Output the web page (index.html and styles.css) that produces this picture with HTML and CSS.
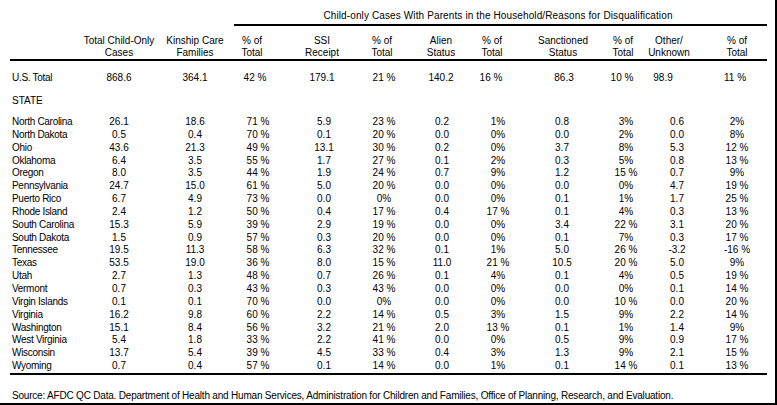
FILE: index.html
```html
<!DOCTYPE html>
<html>
<head>
<meta charset="utf-8">
<link rel="stylesheet" href="styles.css">
</head>
<body>
<div class="sheet">
  <div class="grp"><div class="grp-title">Child-only Cases With Parents in the Household/Reasons for Disqualification</div></div>
  <div class="row head">
    <div></div>
    <div>Total Child-Only<br>Cases</div>
    <div>Kinship Care<br>Families</div>
    <div>% of<br>Total</div>
    <div>SSI<br>Receipt</div>
    <div>% of<br>Total</div>
    <div>Alien<br>Status</div>
    <div>% of<br>Total</div>
    <div>Sanctioned<br>Status</div>
    <div>% of<br>Total</div>
    <div>Other/<br>Unknown</div>
    <div>% of<br>Total</div>
  </div>
  <div class="row us">
    <div>U.S. Total</div><div>868.6</div><div>364.1</div><div>42 %</div><div>179.1</div><div>21 %</div><div>140.2</div><div>16 %</div><div>86.3</div><div>10 %</div><div>98.9</div><div>11 %</div>
  </div>
  <div class="label">STATE</div>
  <div class="rows">
    <div class="row"><div>North Carolina</div><div>26.1</div><div>18.6</div><div>71 %</div><div>5.9</div><div>23 %</div><div>0.2</div><div>1%</div><div>0.8</div><div>3%</div><div>0.6</div><div>2%</div></div>
    <div class="row"><div>North Dakota</div><div>0.5</div><div>0.4</div><div>70 %</div><div>0.1</div><div>20 %</div><div>0.0</div><div>0%</div><div>0.0</div><div>2%</div><div>0.0</div><div>8%</div></div>
    <div class="row"><div>Ohio</div><div>43.6</div><div>21.3</div><div>49 %</div><div>13.1</div><div>30 %</div><div>0.2</div><div>0%</div><div>3.7</div><div>8%</div><div>5.3</div><div>12 %</div></div>
    <div class="row"><div>Oklahoma</div><div>6.4</div><div>3.5</div><div>55 %</div><div>1.7</div><div>27 %</div><div>0.1</div><div>2%</div><div>0.3</div><div>5%</div><div>0.8</div><div>13 %</div></div>
    <div class="row"><div>Oregon</div><div>8.0</div><div>3.5</div><div>44 %</div><div>1.9</div><div>24 %</div><div>0.7</div><div>9%</div><div>1.2</div><div>15 %</div><div>0.7</div><div>9%</div></div>
    <div class="row"><div>Pennsylvania</div><div>24.7</div><div>15.0</div><div>61 %</div><div>5.0</div><div>20 %</div><div>0.0</div><div>0%</div><div>0.0</div><div>0%</div><div>4.7</div><div>19 %</div></div>
    <div class="row"><div>Puerto Rico</div><div>6.7</div><div>4.9</div><div>73 %</div><div>0.0</div><div>0%</div><div>0.0</div><div>0%</div><div>0.1</div><div>1%</div><div>1.7</div><div>25 %</div></div>
    <div class="row"><div>Rhode Island</div><div>2.4</div><div>1.2</div><div>50 %</div><div>0.4</div><div>17 %</div><div>0.4</div><div>17 %</div><div>0.1</div><div>4%</div><div>0.3</div><div>13 %</div></div>
    <div class="row"><div>South Carolina</div><div>15.3</div><div>5.9</div><div>39 %</div><div>2.9</div><div>19 %</div><div>0.0</div><div>0%</div><div>3.4</div><div>22 %</div><div>3.1</div><div>20 %</div></div>
    <div class="row"><div>South Dakota</div><div>1.5</div><div>0.9</div><div>57 %</div><div>0.3</div><div>20 %</div><div>0.0</div><div>0%</div><div>0.1</div><div>7%</div><div>0.3</div><div>17 %</div></div>
    <div class="row"><div>Tennessee</div><div>19.5</div><div>11.3</div><div>58 %</div><div>6.3</div><div>32 %</div><div>0.1</div><div>1%</div><div>5.0</div><div>26 %</div><div>-3.2</div><div>-16 %</div></div>
    <div class="row"><div>Texas</div><div>53.5</div><div>19.0</div><div>36 %</div><div>8.0</div><div>15 %</div><div>11.0</div><div>21 %</div><div>10.5</div><div>20 %</div><div>5.0</div><div>9%</div></div>
    <div class="row"><div>Utah</div><div>2.7</div><div>1.3</div><div>48 %</div><div>0.7</div><div>26 %</div><div>0.1</div><div>4%</div><div>0.1</div><div>4%</div><div>0.5</div><div>19 %</div></div>
    <div class="row"><div>Vermont</div><div>0.7</div><div>0.3</div><div>43 %</div><div>0.3</div><div>43 %</div><div>0.0</div><div>0%</div><div>0.0</div><div>0%</div><div>0.1</div><div>14 %</div></div>
    <div class="row"><div>Virgin Islands</div><div>0.1</div><div>0.1</div><div>70 %</div><div>0.0</div><div>0%</div><div>0.0</div><div>0%</div><div>0.0</div><div>10 %</div><div>0.0</div><div>20 %</div></div>
    <div class="row"><div>Virginia</div><div>16.2</div><div>9.8</div><div>60 %</div><div>2.2</div><div>14 %</div><div>0.5</div><div>3%</div><div>1.5</div><div>9%</div><div>2.2</div><div>14 %</div></div>
    <div class="row"><div>Washington</div><div>15.1</div><div>8.4</div><div>56 %</div><div>3.2</div><div>21 %</div><div>2.0</div><div>13 %</div><div>0.1</div><div>1%</div><div>1.4</div><div>9%</div></div>
    <div class="row"><div>West Virginia</div><div>5.4</div><div>1.8</div><div>33 %</div><div>2.2</div><div>41 %</div><div>0.0</div><div>0%</div><div>0.5</div><div>9%</div><div>0.9</div><div>17 %</div></div>
    <div class="row"><div>Wisconsin</div><div>13.7</div><div>5.4</div><div>39 %</div><div>4.5</div><div>33 %</div><div>0.4</div><div>3%</div><div>1.3</div><div>9%</div><div>2.1</div><div>15 %</div></div>
    <div class="row"><div>Wyoming</div><div>0.7</div><div>0.4</div><div>57 %</div><div>0.1</div><div>14 %</div><div>0.0</div><div>1%</div><div>0.1</div><div>14 %</div><div>0.1</div><div>13 %</div></div>
  </div>
  <div class="source">Source: AFDC QC Data. Department of Health and Human Services, Administration for Children and Families, Office of Planning, Research, and Evaluation.</div>
</div>
</body>
</html>
```

FILE: styles.css
```css
html, body {
  margin: 0;
  background: #fff;
}

.sheet {
  width: 777px;
  height: 405px;
  box-sizing: border-box;
  border-right: 2px solid #000;
  border-bottom: 2px solid #000;
  padding: 9px 0 0 10px;
  font-family: "Liberation Sans", Arial, sans-serif;
  font-size: 10px;
  color: #000;
  overflow: hidden;
}

.grp,
.row {
  display: grid;
  grid-template-columns: 72px 74px 78px 48px 84px 36px 80px 32px 96px 32px 70px 55px;
  width: 757px;
}

.grp-title {
  grid-column: 4 / -1;
  text-align: center;
  line-height: 13px;
  letter-spacing: 0.12px;
  padding-bottom: 2px;
  padding-right: 5px;
  border-bottom: 2px solid #000;
}

.row > div {
  display: flex;
  justify-content: center;
  text-align: center;
  white-space: nowrap;
}

.row > div:first-child {
  justify-content: flex-start;
  text-align: left;
  padding-left: 2px;
  letter-spacing: -0.3px;
}

.row > div:nth-child(12) { padding-right: 5px; }

/* column header */
.head {
  margin-top: 9px;
  line-height: 12px;
  border-bottom: 2px solid #000;
}
.head > div:nth-child(4) { padding-right: 12px; }
.head > div:nth-child(5) { padding-right: 4px; }
.head > div:nth-child(6) { padding-right: 4px; }
.head > div:nth-child(7) { padding-right: 2px; }
.head > div:nth-child(8) { padding-right: 12px; }
.head > div:nth-child(9) { padding-left: 2px; }
.head > div:nth-child(10) { padding-right: 6px; }
.head > div:nth-child(11) { padding-right: 16px; }

/* U.S. total */
.us {
  margin-top: 10px;
  line-height: 13px;
}
.us > div:nth-child(4) { padding-right: 6px; }
.us > div:nth-child(5) { padding-right: 4px; }
.us > div:nth-child(7) { padding-right: 2px; }
.us > div:nth-child(8) { padding-right: 14px; }
.us > div:nth-child(9) { padding-left: 4px; }
.us > div:nth-child(10) { padding-right: 8px; }
.us > div:nth-child(11) { padding-right: 28px; }
.us > div:nth-child(12) { padding-right: 9px; }

.label {
  margin-top: 10px;
  line-height: 13px;
  padding-left: 2px;
}

.rows {
  margin-top: 9px;
  width: 757px;
  border-bottom: 2px solid #000;
}
.rows .row {
  line-height: 12.85px;
}

.source {
  margin-top: 14px;
  line-height: 13px;
  padding-left: 2px;
  letter-spacing: -0.2px;
  white-space: nowrap;
}
```
